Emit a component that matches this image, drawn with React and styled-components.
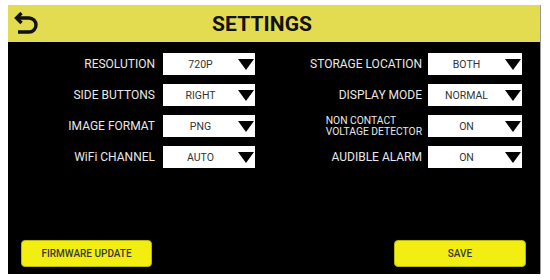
import React from 'react'
import styled, { createGlobalStyle } from 'styled-components'

const Global = createGlobalStyle`
body {
  margin: 0;
  background: #ffffff;
  font-family: Roboto, "Liberation Sans", sans-serif;
}
`

const Page = styled.div`
width: 550px;
height: 280px;
padding: 5px 9px 6px 8px;
box-sizing: border-box;
`

const Screen = styled.div`
height: 100%;
background: #000;
display: flex;
flex-direction: column;
border-right: 1px solid #9a9a9a;
box-sizing: border-box;
`

const Header = styled.div`
height: 37px;
background: #e3dc50;
display: flex;
align-items: center;
padding-left: 6px;
flex-shrink: 0;
`

const Back = styled.svg`
width: 24px;
height: 24px;
flex-shrink: 0;
`

const Title = styled.h1`
margin: 0 0 0 174px;
font-size: 21px;
font-weight: 700;
color: #111;
letter-spacing: 0.1px;
`

const Body = styled.div`
flex: 1;
display: flex;
padding-top: 11px;
`

const Column = styled.div`
display: grid;
grid-template-columns: ${p => p.$label}px ${p => p.$select}px;
column-gap: ${p => p.$gap}px;
grid-auto-rows: 22px;
row-gap: 9px;
margin-left: ${p => p.$offset || 0}px;
`

const Label = styled.div`
color: #e8e8e8;
font-size: 12px;
display: flex;
align-items: center;
justify-content: flex-end;
text-align: left;
`

const SmallLabel = styled.div`
font-size: 10.3px;
line-height: 11.5px;
`

const Select = styled.div`
background: #fff;
display: flex;
align-items: center;
padding-right: 1px;
`

const Value = styled.span`
flex: 1;
text-align: center;
font-size: 10.5px;
color: #333;
`

const Arrow = styled.span`
width: 0;
height: 0;
border-left: 8px solid transparent;
border-right: 8px solid transparent;
border-top: 11px solid #000;
`

const Footer = styled.div`
display: flex;
justify-content: space-between;
padding: 0 14px 7px 13px;
`

const Button = styled.button`
width: ${p => p.$width}px;
height: 27px;
background: #f2ee12;
border: 1px solid #b8b410;
border-radius: 4px;
font-family: Roboto, "Liberation Sans", sans-serif;
font-size: 10px;
font-weight: 500;
color: #3a3a3a;
`

const left = [
  ['RESOLUTION', '720P'],
  ['SIDE BUTTONS', 'RIGHT'],
  ['IMAGE FORMAT', 'PNG'],
  ['WiFi CHANNEL', 'AUTO'],
]

const right = [
  ['STORAGE LOCATION', 'BOTH'],
  ['DISPLAY MODE', 'NORMAL'],
  [['NON CONTACT', 'VOLTAGE DETECTOR'], 'ON'],
  ['AUDIBLE ALARM', 'ON'],
]

function Field({ label, value }) {
  return (
    <>
      <Label>
        {Array.isArray(label) ? (
          <SmallLabel>{label[0]}<br />{label[1]}</SmallLabel>
        ) : label}
      </Label>
      <Select>
        <Value>{value}</Value>
        <Arrow />
      </Select>
    </>
  )
}

export default function App() {
  return (
    <Page>
      <Global />
      <Screen>
        <Header>
          <Back viewBox="0 0 24 24" fill="none" stroke="#111" strokeWidth="3.4">
            <path d="M7.5 1 L2.5 6 L7.5 11" />
            <path d="M2.5 6 H15 A7 7 0 0 1 15 20 H4" />
          </Back>
          <Title>SETTINGS</Title>
        </Header>
        <Body>
          <Column $label={147} $select={92} $gap={8}>
            {left.map(([l, v]) => <Field key={v + l} label={l} value={v} />)}
          </Column>
          <Column $label={162} $select={94} $gap={6} $offset={5}>
            {right.map(([l, v], i) => <Field key={i} label={l} value={v} />)}
          </Column>
        </Body>
        <Footer>
          <Button $width={131}>FIRMWARE UPDATE</Button>
          <Button $width={132}>SAVE</Button>
        </Footer>
      </Screen>
    </Page>
  )
}
